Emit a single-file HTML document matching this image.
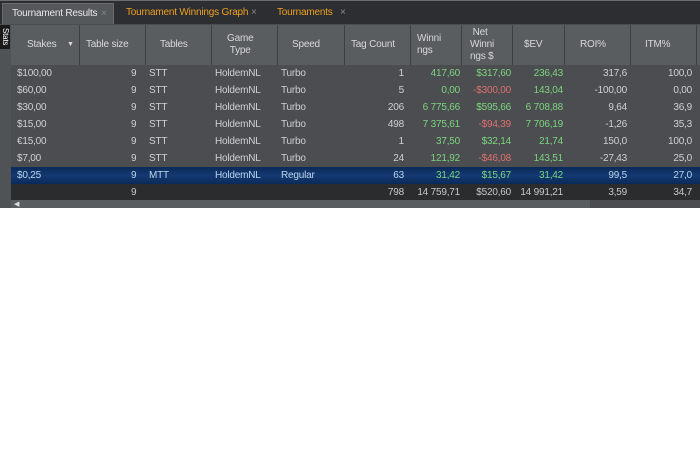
<!DOCTYPE html>
<html><head><meta charset="utf-8"><style>
*{margin:0;padding:0;box-sizing:border-box}
body{width:700px;height:451px;background:#fff;font-family:"Liberation Sans","DejaVu Sans",sans-serif;font-size:10px;letter-spacing:-0.2px;position:relative;overflow:hidden}
.abs{position:absolute}
#tabs{left:0;top:0;width:700px;height:24px;background:#2c2e31;border-top:1px solid #6a6d70}
.tab{position:absolute;top:2px;height:22px;line-height:20px;padding-left:9px;font-size:10px}
.x{position:absolute;font-size:10px;color:#888;top:0}
#strip{left:0;top:24px;width:11px;height:184px;background:#505356}
#stats{left:0;top:25px;width:10px;height:24px;background:#1a1a1a;color:#fff;font-size:8px;writing-mode:vertical-rl;text-align:center;line-height:10px}
#grid{left:11px;top:24px;width:689px;height:176px;background:#4b4d50}
#hdr{left:11px;top:25px;width:689px;height:40px;background:#5a5d60}
.h{position:absolute;top:0;height:40px;display:flex;align-items:center;color:#d8d8d8;line-height:12px;padding-left:9px;border-right:1px solid #3d3f42}
.row{position:absolute;left:11px;width:689px;height:17px;color:#d0d0d0}
.c{position:absolute;top:0;height:17px;line-height:17px;white-space:nowrap}
.g{color:#7bd57f}.r{color:#e07070}
</style></head><body>
<div id="tabs" class="abs">
 <div class="tab" style="left:2px;width:112px;background:#55585b;color:#e8e8e8;border:1px solid #6a6d70;border-bottom:none">Tournament Results<span class="x" style="left:98px">×</span></div>
 <div class="tab" style="left:117px;width:146px;color:#f0a020">Tournament Winnings Graph<span class="x" style="left:134px">×</span></div>
 <div class="tab" style="left:268px;width:88px;color:#f0a020">Tournaments<span class="x" style="left:72px">×</span></div>
</div>
<div id="strip" class="abs"></div>
<div id="stats" class="abs">Stats</div>
<div id="grid" class="abs"></div>
<div id="hdr" class="abs">
 <div class="h" style="left:0;width:69px;padding-left:16px">Stakes<span style="position:absolute;left:56px;font-size:7px">▼</span></div>
 <div class="h" style="left:69px;width:66px;padding-left:6px">Table size</div>
 <div class="h" style="left:135px;width:66px;padding-left:14px">Tables</div>
 <div class="h" style="left:201px;width:66px;padding-left:15px;text-align:center">Game<br>Type</div>
 <div class="h" style="left:267px;width:67px;padding-left:14px">Speed</div>
 <div class="h" style="left:334px;width:66px;padding-left:6px">Tag Count</div>
 <div class="h" style="left:400px;width:51px;padding-left:6px">Winni<br>ngs</div>
 <div class="h" style="left:451px;width:51px;padding-left:8px">&nbsp;Net<br>Winni<br>ngs $</div>
 <div class="h" style="left:502px;width:52px;padding-left:11px">$EV</div>
 <div class="h" style="left:554px;width:66px;padding-left:15px">ROI%</div>
 <div class="h" style="left:620px;width:66px;padding-left:14px">ITM%</div>
</div>
<div id="rows"></div>
<script>
var d=[["$100,00","9","STT","HoldemNL","Turbo","1","417,60","$317,60","236,43","317,6","100,0",0],
["$60,00","9","STT","HoldemNL","Turbo","5","0,00","-$300,00","143,04","-100,00","0,00",1],
["$30,00","9","STT","HoldemNL","Turbo","206","6 775,66","$595,66","6 708,88","9,64","36,9",0],
["$15,00","9","STT","HoldemNL","Turbo","498","7 375,61","-$94,39","7 706,19","-1,26","35,3",1],
["€15,00","9","STT","HoldemNL","Turbo","1","37,50","$32,14","21,74","150,0","100,0",0],
["$7,00","9","STT","HoldemNL","Turbo","24","121,92","-$46,08","143,51","-27,43","25,0",1],
["$0,25","9","MTT","HoldemNL","Regular","63","31,42","$15,67","31,42","99,5","27,0",2]];
var h="";
d.forEach(function(r,i){
 var top=65+i*17,sel=r[11]==2;
 var bg=sel?"background:linear-gradient(#0a2a58,#143a72,#0a2a58);color:#b8d4ec;":"";
 h+='<div class="row" style="top:'+top+'px;'+bg+'">'+
 '<div class="c" style="left:6px">'+r[0]+'</div>'+
 '<div class="c" style="left:120px">'+r[1]+'</div>'+
 '<div class="c" style="left:138px">'+r[2]+'</div>'+
 '<div class="c" style="left:204px">'+r[3]+'</div>'+
 '<div class="c" style="left:270px">'+r[4]+'</div>'+
 '<div class="c" style="right:296px">'+r[5]+'</div>'+
 '<div class="c g" style="right:240px">'+r[6]+'</div>'+
 '<div class="c '+(r[11]==1?"r":"g")+'" style="right:189px">'+r[7]+'</div>'+
 '<div class="c g" style="right:137px">'+r[8]+'</div>'+
 '<div class="c" style="right:73px">'+r[9]+'</div>'+
 '<div class="c" style="right:8px">'+r[10]+'</div></div>';
});
h+='<div class="row" style="top:184px;height:16px;background:#2a2c2e;color:#c8c8c8">'+
 '<div class="c" style="left:120px">9</div>'+
 '<div class="c" style="right:296px">798</div>'+
 '<div class="c" style="right:240px">14 759,71</div>'+
 '<div class="c" style="right:189px">$520,60</div>'+
 '<div class="c" style="right:137px">14 991,21</div>'+
 '<div class="c" style="right:73px">3,59</div>'+
 '<div class="c" style="right:8px">34,7</div></div>';
document.getElementById("rows").innerHTML=h;
</script>
<div class="abs" style="left:11px;top:200px;width:689px;height:8px;background:#5a5d60"></div>
<div class="abs" style="left:590px;top:200px;width:110px;height:8px;background:#4a4c4f"></div>
<div class="abs" style="left:14px;top:201px;width:6px;height:7px;color:#ddd;font-size:7px;line-height:7px">◀</div>
</body></html>
